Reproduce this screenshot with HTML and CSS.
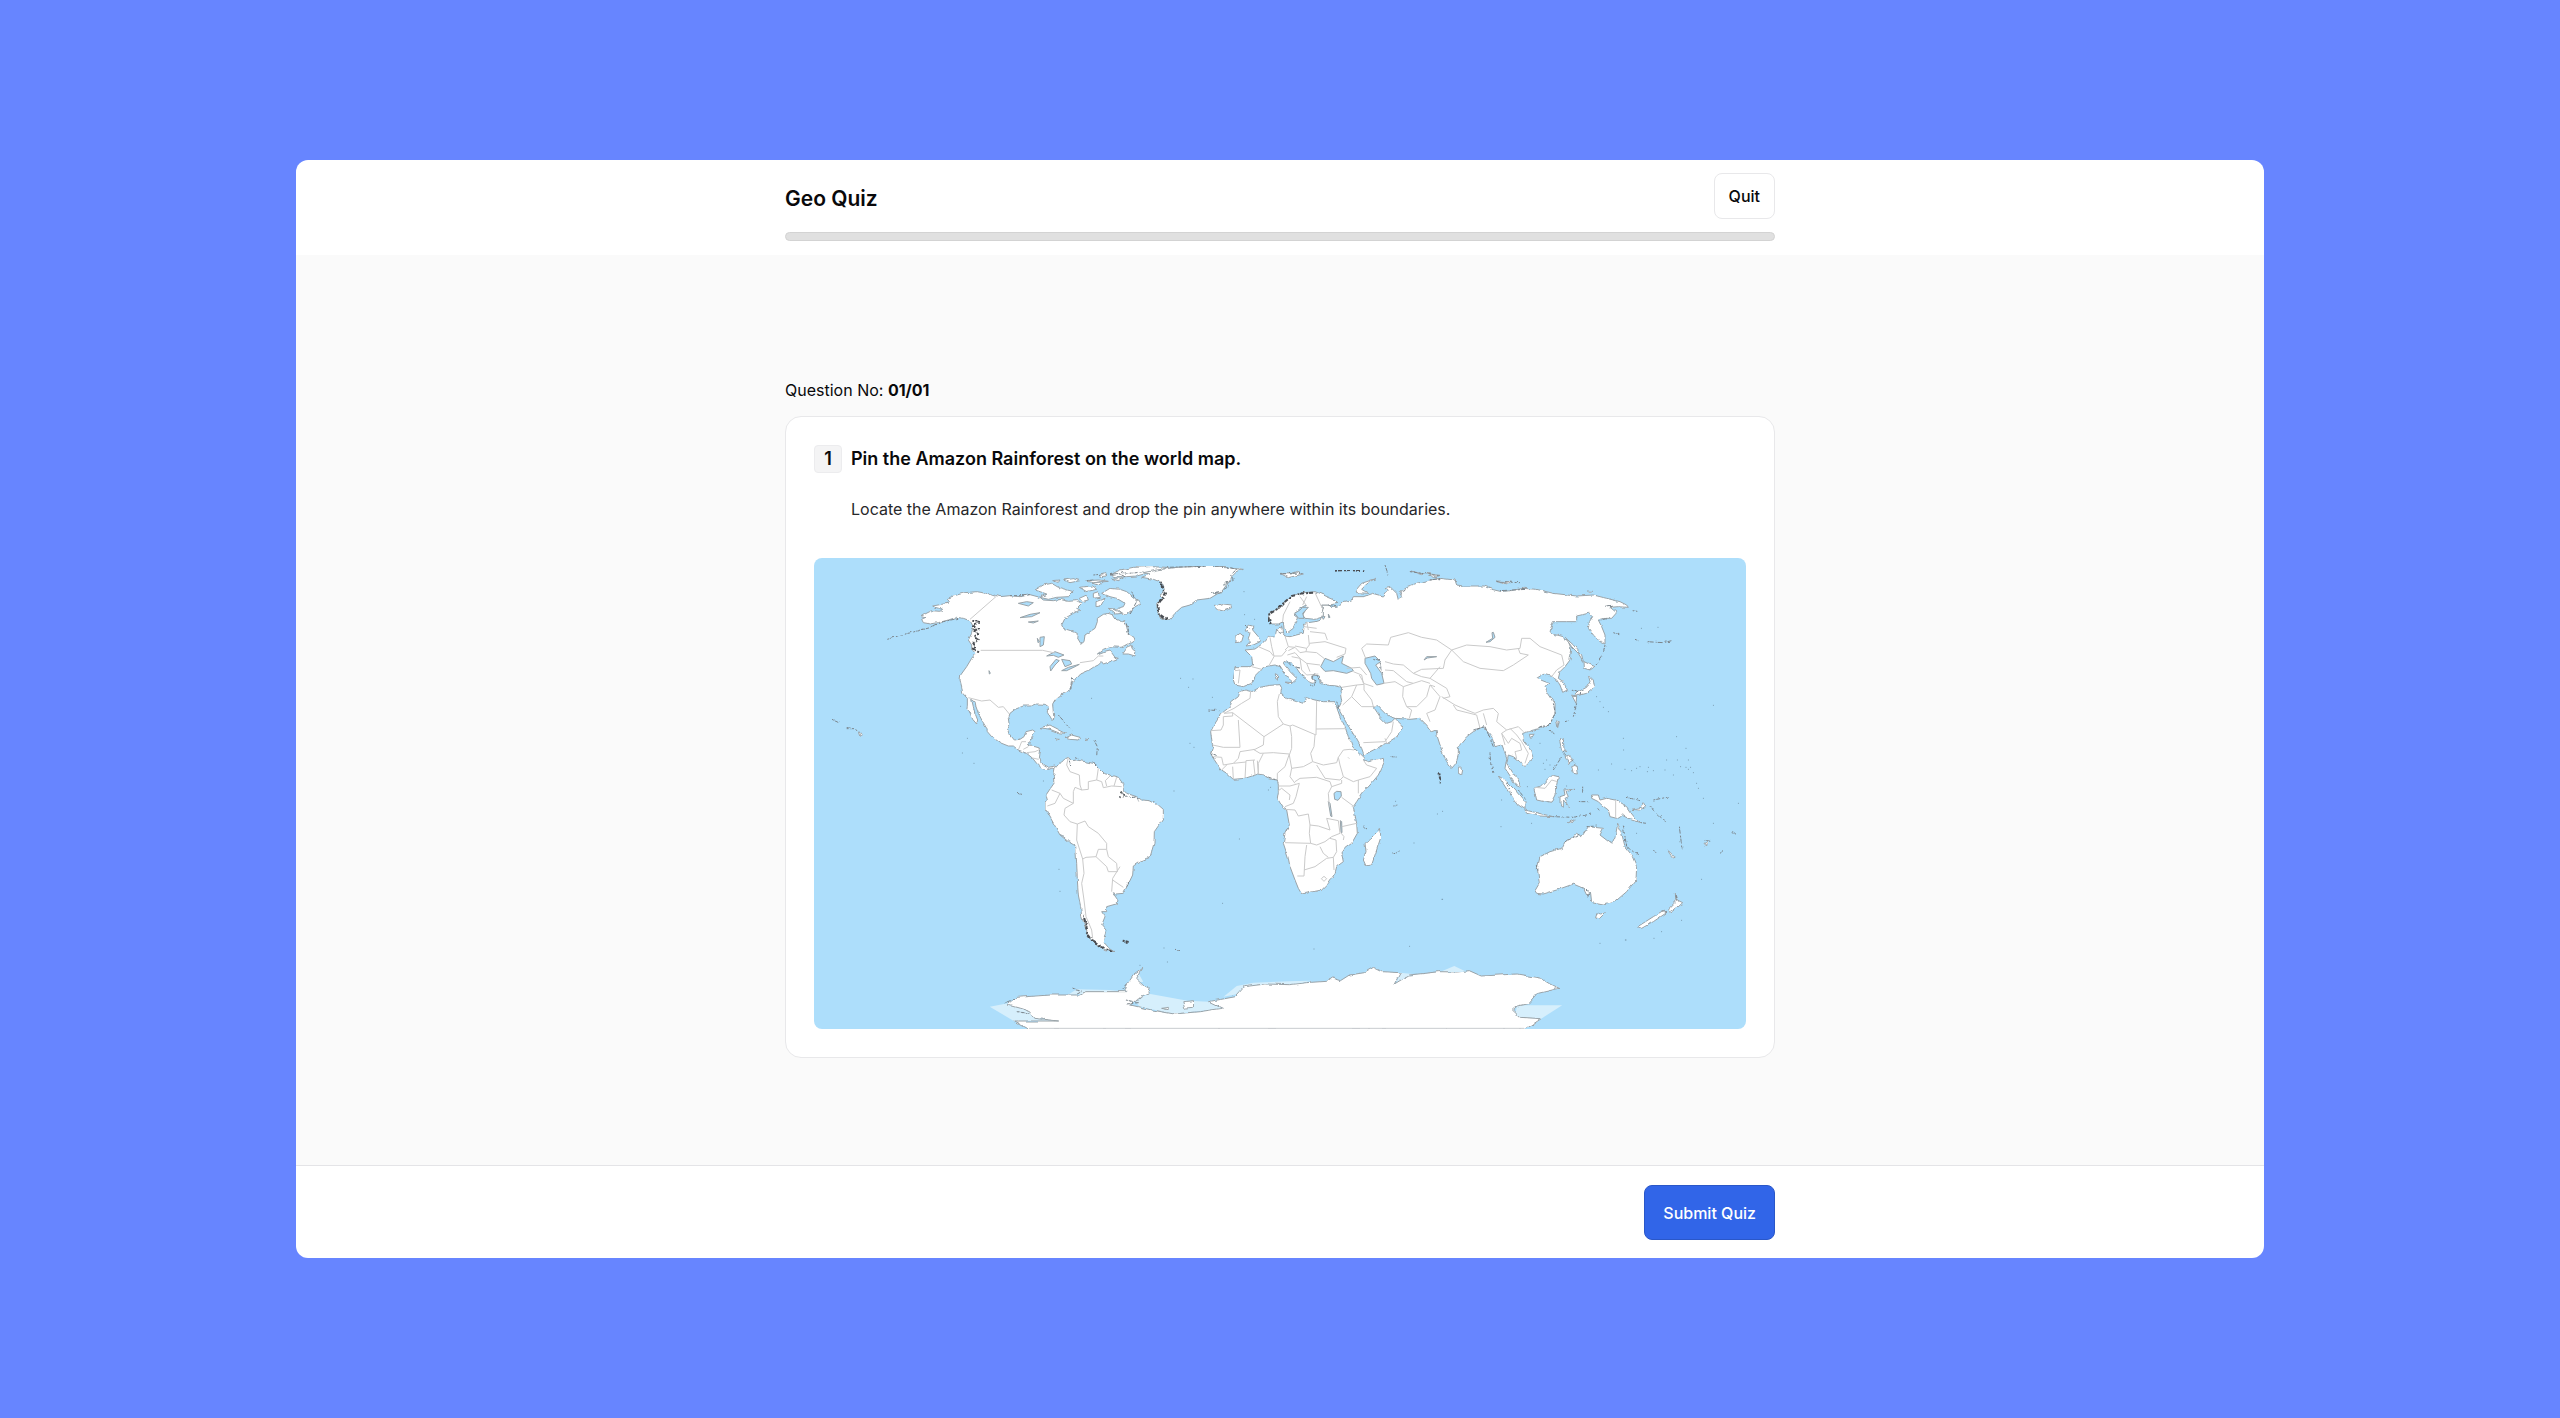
FILE: index.html
```
<!DOCTYPE html>
<html lang="en">
<head>
	<meta charset="UTF-8">
	<title>Geo Quiz</title>
	<link rel="stylesheet" href="styles.css">
</head>
<body>
	<div class="quiz">
		<header class="header">
			<div class="wrap">
				<div class="title-row">
					<h1 class="title">Geo Quiz</h1>
					<button type="button" class="btn btn-quit">Quit</button>
				</div>
				<div class="progress" role="progressbar" aria-label="Progress" aria-valuenow="0" aria-valuemin="0" aria-valuemax="100"></div>
			</div>
		</header>

		<main class="content">
			<div class="wrap">
				<p class="count">Question No: <b>01/01</b></p>
				<section class="card">
					<div class="question">
						<span class="num">1</span>
						<div>
							<h2 class="question-title">Pin the Amazon Rainforest on the world map.</h2>
							<p class="question-text">Locate the Amazon Rainforest and drop the pin anywhere within its boundaries.</p>
						</div>
					</div>
					<svg class="map" viewBox="0 0 2796 1413" role="img" aria-label="World map">
						<defs>
							<filter id="coast" x="0" y="0" width="100%" height="100%">
								<feTurbulence type="fractalNoise" baseFrequency="0.05" numOctaves="3" seed="4" result="n"/>
								<feDisplacementMap in="SourceGraphic" in2="n" scale="10" xChannelSelector="R" yChannelSelector="G"/>
							</filter>
						</defs>

						<!-- north america -->
						<g transform="translate(-12 -24)">
							<path class="land" d="M362,222 340,218 335,208 345,203 333,200 345,192 365,182 390,184 398,178 375,172 368,168 395,163 412,160 418,155 411,146 430,138 465,128 500,125 545,132 570,140 600,137 630,140 660,134 690,142 700,150 730,152 750,148 775,154 800,152 815,160 800,175 810,180 790,190 765,205 755,225 760,235 785,243 805,250 803,268 812,283 822,275 825,255 840,245 855,235 862,215 862,205 880,193 895,190 910,195 918,208 935,215 945,212 950,235 955,250 972,262 975,270 960,280 950,285 930,292 900,290 880,298 862,312 880,305 900,300 905,308 915,322 925,325 900,335 880,342 875,335 865,345 850,352 835,362 812,372 800,385 790,392 785,405 782,418 765,428 748,440 735,452 728,465 730,485 732,505 725,508 715,490 715,470 705,463 680,462 665,468 640,468 615,478 600,490 595,505 597,520 592,535 598,555 610,570 630,568 642,560 648,545 668,540 675,545 665,562 658,575 655,588 675,590 692,595 690,610 688,625 700,645 715,652 735,648 745,660 725,655 710,660 695,655 680,640 668,625 650,610 625,600 610,588 595,588 570,578 545,560 532,545 530,535 518,515 505,490 498,470 495,455 485,448 490,470 495,490 503,510 500,522 488,508 480,488 470,480 472,465 472,445 458,430 455,410 450,390 452,375 470,350 485,325 495,312 485,300 485,285 475,270 485,250 490,230 480,212 460,205 440,202 415,210 385,218Z"/>
							<path class="land" d="M675,120 700,105 725,100 745,112 790,125 775,140 740,142 715,148 690,142 710,132 690,125Z M875,130 900,115 930,118 950,125 975,145 995,160 975,170 960,185 945,195 925,185 910,178 940,170 945,160 920,145 900,140Z M900,75 930,60 970,52 1020,50 1070,52 1050,62 1010,70 980,78 950,80 920,82Z M845,100 880,95 865,106Z M808,112 845,108 860,118 830,125Z M850,130 865,125 868,142 850,145Z M808,145 830,135 835,150 815,155Z M858,155 885,145 872,168 858,170Z M895,175 920,178 935,190 915,192Z M760,90 790,86 810,92 780,98Z M728,92 750,90 745,97Z M825,92 870,90 895,94 850,98Z M870,72 885,68 890,78 870,80Z M905,85 940,84 925,92Z"/>
							<path class="land" d="M938,312 950,295 962,285 968,298 978,305 975,318 955,312Z M690,533 720,525 745,538 768,550 745,548 720,538Z M765,565 785,555 810,562 805,570 775,568Z M735,567 748,568 742,572Z M825,567 837,569 828,571Z M145,546 155,552 150,560Z"/>
							<path class="land" d="M995,82 1020,72 1000,68 1040,60 1100,52 1180,48 1250,50 1265,55 1300,58 1280,65 1265,80 1260,95 1240,105 1250,104 1235,125 1200,130 1225,130 1200,145 1160,150 1140,165 1115,172 1095,190 1080,208 1070,210 1050,200 1042,180 1040,160 1055,150 1050,135 1065,125 1060,105 1050,95 1030,88Z"/>
							<path class="land" d="M1212,165 1225,168 1240,162 1265,165 1268,173 1240,183 1220,178Z"/>
							<path class="lake" d="M710,318 735,305 762,315 745,322 730,316Z M722,363 720,350 738,328 748,332 735,345Z M755,328 780,332 785,342 765,350Z M755,362 775,352 808,343 795,350 770,362Z M625,160 650,155 670,158 655,168Z M630,203 660,193 690,188 665,200Z M655,216 685,213 670,219Z M690,262 703,260 700,285 690,290Z M682,265 688,275 684,278Z M537,362 541,370 538,372Z"/>
							<path class="border" d="M560,138 480,208 M512,301 698,301 735,309 M810,338 850,332 865,318 880,318 M475,443 515,453 540,450 565,472 580,470 598,492 M625,600 635,575 648,575 M640,598 655,590 M650,608 675,605 690,598 M668,624 686,628"/>
							<path class="rough" d="M487,212 505,215 490,228 507,235 488,245 505,250 492,262 506,268 490,280 498,290 488,296 508,308"/>
							<path class="rough thin" d="M232,268 270,256 310,246 360,232 400,215 445,205 M600,137 640,137 660,133 M945,215 955,240 955,255 M785,385 782,418 M745,495 760,512 790,542 M852,570 862,590 860,620 M110,536 130,536 148,545 M66,508 90,520"/>
							<path class="rough thin" d="M935,68 960,70 1000,65 M900,74 925,70 945,80 M965,125 980,155 960,190 M850,75 880,72 M830,92 850,90 M1250,50 1280,58 1262,75 1270,88 1245,100 1255,110 1230,125 1210,128 M1070,52 1150,50 1240,48"/>
							<path class="rough" d="M1052,95 1058,120 1068,130 1052,152 1042,165 1045,190 1072,210"/>
						</g>

						<!-- south america -->
						<g transform="translate(438 546)">
							<path class="land" d="M285,85 305,62 325,52 335,62 350,60 375,65 400,70 415,85 430,100 450,105 475,112 488,130 490,150 500,160 530,170 545,180 570,182 595,195 610,208 610,235 595,258 583,275 582,310 570,352 545,362 520,378 518,405 505,432 490,460 468,462 460,458 472,475 468,492 440,500 440,515 425,515 435,530 425,555 438,570 432,595 430,605 445,622 465,635 435,632 405,612 385,590 375,560 365,530 362,500 355,465 352,420 350,370 347,318 325,305 300,285 275,240 255,205 255,190 262,180 258,165 268,150 282,130 280,110Z"/>
							<path class="border" d="M325,52 320,75 330,95 358,105 360,135 365,150 385,148 385,125 410,120 415,85 M365,150 345,142 340,155 340,190 310,175 300,160 275,150 M300,160 285,190 262,198 M340,190 315,205 312,225 330,245 352,252 375,243 385,260 415,280 440,310 440,328 415,328 408,350 378,352 368,357 350,300 352,252 M440,328 445,350 470,370 472,395 445,395 440,380 408,350 M480,380 458,415 455,455 M458,420 490,442 M368,357 372,400 365,430 372,480 378,530 395,570 398,595 M410,120 425,125 430,143 455,138 485,140 M450,108 436,122 440,138 M470,112 462,138"/>
							<path class="rough" d="M370,525 380,560 378,575 395,600 415,618 440,628 462,636 M376,550 384,582 402,606 428,624 M482,155 492,168 478,172 M488,602 506,606"/>
							<path class="rough thin" d="M485,160 505,175 530,170 536,184 M500,440 508,425 M645,628 662,632 M328,62 332,78 M172,160 186,163 M400,68 412,82 M345,50 355,54"/>
						</g>

						<!-- europe and asia -->
						<g transform="translate(1158 -24)">
							<path class="land" d="M105,350 150,350 158,345 155,320 135,300 165,297 175,290 195,275 205,262 225,260 230,238 245,228 248,250 255,258 270,260 300,252 310,250 312,230 310,220 345,215 360,210 370,190 365,165 390,165 392,172 415,172 430,155 455,150 460,140 490,140 520,130 550,138 565,120 555,112 570,110 590,130 595,150 605,140 598,125 620,110 650,100 690,90 720,85 765,90 770,105 790,108 850,108 875,118 905,125 930,122 970,115 1010,118 1060,130 1130,138 1180,135 1220,145 1260,155 1280,165 1285,172 1255,170 1230,172 1250,188 1235,205 1215,205 1195,210 1205,230 1215,255 1215,282 1200,275 1180,255 1165,235 1168,215 1178,200 1165,190 1130,198 1130,215 1100,215 1060,215 1050,245 1060,252 1090,260 1105,275 1115,300 1110,330 1095,350 1080,365 1075,385 1090,395 1102,420 1088,427 1080,405 1070,390 1055,380 1030,372 1010,385 1035,395 1050,400 1035,412 1045,430 1065,460 1065,490 1050,520 1025,535 1000,540 985,545 968,550 970,570 990,595 998,620 985,640 975,650 960,635 940,620 925,615 920,640 940,670 955,690 962,712 945,705 932,680 915,655 920,625 905,585 885,590 875,560 850,530 820,545 800,560 775,590 775,615 768,640 755,655 740,635 725,600 712,560 708,540 695,545 680,525 660,505 630,508 585,505 570,500 555,490 530,465 520,470 540,500 560,520 575,515 585,505 605,525 610,535 590,560 560,580 520,600 492,615 485,595 465,560 440,520 420,485 418,470 425,455 422,435 425,412 410,408 380,405 360,395 358,378 350,376 335,378 345,395 340,400 330,398 318,385 300,370 290,355 275,340 258,335 250,340 270,365 290,385 285,392 275,400 272,385 255,375 240,350 225,345 205,348 190,352 180,365 165,380 155,400 130,410 120,408 105,405 100,390Z"/>
							<path class="land" d="M215,222 205,205 208,190 235,175 255,155 275,138 310,128 345,125 370,135 400,148 412,160 390,165 365,165 370,190 370,200 345,208 315,205 308,195 320,175 318,165 300,175 282,195 295,205 280,235 262,248 252,235 250,215 235,222Z"/>
							<path class="land" d="M145,225 158,228 158,240 175,260 180,275 160,285 138,288 150,275 145,265 150,250 135,240Z M105,262 120,250 130,258 125,275 105,278Z M468,120 485,100 530,85 500,102 485,118 505,130 470,128Z M240,70 270,72 290,64 310,72 265,83Z M255,396 276,398 272,404Z M226,368 233,372 232,388 227,386Z M628,62 670,72 665,74Z M675,70 720,76 700,82Z M888,93 930,95 925,102 900,98Z M1162,123 1178,124 1170,128Z M360,392 366,398 360,400Z"/>
							<path class="land" d="M775,648 788,660 785,675 775,670Z M1152,335 1185,350 1170,360 1153,355Z M1165,375 1180,390 1183,410 1160,430 1140,435 1120,440 1135,425 1160,412 1170,395Z M1115,435 1130,440 1128,460Z M1095,262 1120,285 1145,315 1150,335 1135,310 1115,290Z M1070,512 1078,515 1073,533Z M988,553 1002,553 992,567Z M1078,568 1090,568 1092,595 1100,605 1085,600Z M1115,650 1128,645 1132,672 1120,670Z M1095,620 1105,615 1120,630 1105,640Z"/>
							<path class="lake" d="M375,325 400,335 430,318 425,340 455,355 460,362 440,370 400,362 375,364 362,350Z M495,325 525,318 542,335 527,345 545,370 552,400 530,405 515,385 512,370 495,340Z M870,275 885,262 880,247 876,248 878,265 858,277Z M672,330 680,320 710,320 682,324Z M308,172 300,180 284,190 296,205 312,205 308,190 325,172Z M365,198 375,200 370,208Z M385,192 390,202 386,203Z"/>
							<path class="border" d="M105,362 120,360 115,400 M155,350 185,358 M175,290 210,305 222,320 208,345 M210,262 215,290 222,318 245,318 260,300 M255,258 265,290 285,292 265,302 M265,290 255,300 M325,255 328,285 320,295 285,288 M328,280 375,275 M330,245 375,250 382,270 M375,275 438,295 435,312 410,322 M320,295 318,305 350,308 372,325 M285,292 300,308 318,305 M262,315 285,308 300,325 320,340 360,345 M300,325 305,360 320,375 355,372 M320,340 330,365 M275,320 300,325 M312,230 350,235 M320,215 325,240 M270,155 250,195 248,215 M300,140 318,165 M345,128 362,165 370,180 M308,165 320,140"/>
							<path class="border" d="M440,355 480,352 500,375 M460,365 485,375 490,400 520,410 M425,412 470,405 492,403 M470,405 455,440 428,465 M455,440 485,470 520,470 515,450 492,420 492,403 M492,400 478,375 M580,515 575,545 555,575 490,578 M555,565 560,580 M550,400 585,395 610,410 608,440 620,470 635,480 628,505 M610,410 640,400 665,392 690,400 M620,470 650,470 680,440 690,405 705,410 M690,405 720,440 705,480 680,490 690,515 M555,335 580,342 610,345 640,370 665,380 M555,360 580,362 620,395 640,400 M497,325 485,295 500,282 565,285 572,262 625,248 665,262 710,270 755,300 735,330 730,355 665,358 640,370 M665,380 690,385 720,350 M690,385 740,415 750,440 730,445 M755,300 800,285 870,290 920,300 960,295 965,265 990,265 1020,290 1085,315 1092,345 1070,360 1055,380 M755,300 790,335 840,355 910,362 940,345 985,315 960,310 955,295 M725,440 765,465 800,480 825,490 850,480 880,475 895,490 890,515 920,540 955,530 970,545 M760,465 770,480 830,495 840,535 M850,490 860,525 M905,550 915,585 M920,540 905,550 925,580 935,565 960,580 965,600 945,605 950,625 M930,535 950,555 965,575 985,610 975,640 M1080,395 1092,392"/>
							<path class="rough" d="M212,222 206,208 208,192 235,175 255,155 275,138 310,130 345,128 M405,62 450,60 490,64 M718,670 722,700"/>
							<path class="rough thin" d="M258,332 272,345 300,355 M345,370 335,382 350,395 345,410 330,405 M350,375 358,390 M230,238 240,250 250,245 M135,225 145,235 M240,72 310,68 M630,65 720,78 M555,45 565,75 M690,90 720,86 M598,128 625,115 M890,95 960,98 M900,122 980,118 M1215,172 1240,168 M1200,210 1225,205 M1298,182 1312,184 M1240,248 1258,254 M1305,268 1315,272 M1340,275 1390,278 1415,272 M1215,285 1210,310 1185,345 M1130,460 1120,500 M1095,515 1105,512 M1115,420 1145,432 M1060,460 1066,490 1050,520 1020,535 M820,540 855,530 880,590 M870,610 872,640 882,670 M1085,620 1060,660 M1085,600 1125,640 M1050,540 1062,555 M520,325 540,332 545,375 M575,620 590,622 M385,165 412,172 M410,455 420,480 M25,480 60,482"/>
						</g>

						<!-- africa -->
						<g transform="translate(1128 336)">
							<path class="land" d="M150,65 165,60 185,65 210,52 240,46 270,44 275,55 272,72 290,85 320,95 335,102 345,90 345,82 375,90 400,95 432,95 440,112 450,140 465,170 475,200 485,215 492,235 510,250 525,265 520,270 535,275 580,265 582,278 565,315 540,345 515,372 500,395 490,410 495,435 500,460 502,490 485,520 465,535 455,550 460,575 440,590 435,610 415,640 395,660 370,665 335,672 325,655 315,630 300,590 295,565 280,520 285,490 298,465 290,420 280,415 262,385 265,365 265,345 262,330 245,328 230,325 225,315 205,312 180,320 165,325 130,328 110,310 95,300 80,280 70,265 62,250 68,230 65,210 62,185 72,165 95,130 120,110 125,95 145,80Z"/>
							<path class="land" d="M568,475 573,500 560,540 545,585 528,588 520,570 528,545 525,520 545,505 560,490Z"/>
							<path class="lake" d="M432,370 440,364 453,365 454,378 444,391 434,388Z M415,395 420,400 426,440 422,438Z M451,452 455,455 456,488 453,486Z"/>
							<path class="border" d="M182,62 180,85 155,100 132,115 102,130 128,128 128,138 100,140 100,165 93,180 62,182 M128,128 222,200 280,162 300,168 308,165 378,195 380,92 M268,72 262,95 265,140 280,162 M145,150 150,232 100,232 68,225 M222,200 220,225 195,238 150,245 145,265 130,280 100,285 M378,177 468,176 M375,195 372,230 362,250 368,275 400,285 440,278 445,262 460,240 480,238 492,240 M300,168 305,200 305,235 298,255 M305,295 340,290 368,275 M190,238 210,250 250,248 298,252 M205,312 205,280 220,250 M298,252 285,290 262,310 262,330 M298,255 305,295 300,320 315,340 M380,285 405,325 450,330 460,320 450,285 445,262 M460,320 490,335 505,330 540,320 560,295 530,285 520,270 M505,330 505,370 M315,335 330,325 380,322 420,335 M265,348 300,348 328,340 318,380 310,400 285,410 M265,362 275,355 300,375 298,390 M420,335 425,350 415,370 418,410 M455,382 490,408 M455,470 500,460 M285,418 315,420 325,438 355,432 360,465 358,490 362,520 285,518 M360,465 385,468 420,480 410,445 445,452 450,490 425,500 405,515 380,525 362,520 M350,525 345,560 342,618 322,618 M342,600 375,590 410,565 430,562 440,545 438,510 420,505 M390,530 400,550 415,562 M430,562 432,600 M165,325 168,272 195,270 M195,315 190,270 M205,312 202,272 M130,328 128,290 M130,280 168,276 M100,285 95,262 70,260 M95,300 110,285 M425,350 455,340 455,330 M452,488 462,500 460,510 M394,626 402,619 410,626 402,634Z M474,262 478,266"/>
							<path class="rough thin" d="M62,250 80,256 M68,262 78,268 M432,98 438,108 M520,468 532,478 M610,408 622,405 M610,552 628,545 M225,318 260,330"/>
						</g>

						<!-- oceania -->
						<g transform="translate(1878 366)">
							<path class="land" d="M290,640 285,632 298,610 292,565 300,530 330,515 365,505 375,485 410,460 425,470 445,440 490,445 480,465 515,492 525,470 533,430 545,460 555,500 575,525 590,560 588,600 560,635 525,665 490,675 455,668 452,640 440,645 430,625 400,612 350,630 310,642Z"/>
							<path class="land" d="M470,698 482,702 496,698 478,716 467,714Z M703,640 712,660 728,668 710,685 690,698 685,690 705,670Z M593,740 640,710 672,690 680,698 640,725 605,745Z M175,288 195,300 225,330 255,365 255,388 235,375 205,335Z M255,390 310,403 340,410 300,408 260,400Z M282,325 300,320 335,285 355,290 350,315 348,345 335,370 290,360Z M360,350 375,345 372,330 405,328 378,335 385,350 375,355 388,380 370,360 370,385 360,370Z M455,345 475,345 480,360 500,355 525,360 560,380 570,395 590,420 600,428 575,420 545,405 530,415 510,410 505,390 485,375 475,365 455,355Z M575,388 605,382 612,368 617,378 600,390Z M685,512 705,532 700,534 688,520Z M385,428 405,418 395,430Z M792,490 802,486 800,498Z"/>
							<path class="border" d="M527,360 527,415 M285,322 315,325 335,300 352,305"/>
							<path class="rough thin" d="M340,410 400,412 455,402 M415,365 450,365 M428,320 428,345 M630,380 660,410 680,425 M718,440 726,505 M550,440 560,500 580,515 600,528 M196,300 215,345 M235,330 258,360 M430,625 445,635 440,650 452,640 M375,485 420,462 M440,440 470,438 M292,555 294,572 M640,360 690,350 M560,352 600,362 M665,692 680,698 M705,645 710,662 M470,385 478,395 M640,510 650,520 M600,428 625,430 M840,520 850,512 M875,458 888,462 M790,480 812,484"/>
							<path class="dots" d="M475,270h0 M515,252h0 M555,268h0 M575,272h0 M590,265h0 M600,260h0 M622,275h0 M625,262h0 M640,272h0 M680,240h0 M675,270h0 M700,285h0 M712,240h0 M722,260h0 M738,262h0 M745,240h0 M745,268h0 M752,262h0 M760,278h0 M770,310h0 M775,325h0 M790,355h0 M738,205h0 M820,76h0 M710,170h0 M550,175h0 M551,210h0 M470,50h0 M480,65h0 M490,82h0 M505,95h0 M300,190h0 M320,240h0 M310,250h0 M315,268h0 M330,255h0 M183,440h0 M275,430h0 M185,360h0 M895,370h0 M820,430h0 M785,598h0 M725,721h0 M558,780h0 M642,775h0 M665,755h0 M8,658h0 M590,460h0 M380,318h0 M262,320h0"/>
						</g>
						<path class="dots" d="M833,421h0 M440,445h0 M445,585h0 M460,541h0 M480,616h0 M688,669h0 M1137,363h0 M1124,388h0 M1100,361h0 M1195,418h0 M1128,556h0 M1140,568h0 M738,1000h0 M735,934h0 M1080,699h0 M1290,101h0 M1292,170h0 M1322,184h0 M1276,843h0 M1226,1036h0 M1363,696h0 M1370,688h0 M1500,1173h0 M1787,1165h0 M1884,1024h0 M1870,768h0 M1745,730h0 M1800,855h0 M2358,1156h0 M2434,1146h0 M1050,1170h0 M1060,1212h0 M978,1222h0 M2482,211h0 M2532,208h0 M1886,760h0"/>

						<!-- antarctica -->
						<g transform="translate(-12 1146) scale(1.798 1)">
							<path class="ice" d="M300,200 330,190 370,215 375,235 415,243 340,243Z M540,178 568,162 630,182 665,185 690,205 608,222 550,200Z M1180,196 1255,196 1220,236 1175,236Z M690,170 712,138 740,128 800,124 835,122 800,140 720,160Z M978,132 985,98 1005,102Z M1050,97 1075,78 1095,95Z M430,165 445,148 500,150 530,155Z M535,130 548,100 556,125Z"/>
							<path class="land" d="M340,243 415,243 375,235 368,215 350,205 330,195 345,172 400,165 450,165 460,155 525,155 530,130 540,105 555,85 545,115 560,140 568,160 545,178 535,195 570,210 608,222 650,215 688,205 665,185 710,170 725,140 760,132 800,134 830,128 862,124 870,114 885,122 900,105 925,98 940,82 955,95 985,98 975,132 1000,105 1050,95 1080,96 1100,92 1120,108 1180,102 1220,115 1232,128 1250,145 1215,160 1200,190 1180,198 1172,210 1185,232 1220,236 1192,270 368,270Z"/>
							<path class="land" d="M622,185 640,182 640,202 625,205Z M585,205 598,202 596,209Z"/>
							<path class="rough thin" d="M440,145 455,150 445,160 M527,180 548,188 530,192 M522,150 532,125 M345,215 368,222 M325,190 345,175"/>
						</g>
						<path class="edge" d="M645,1411H2130"/>
					</svg>
				</section>
			</div>
		</main>

		<footer class="footer">
			<div class="wrap footer-row">
				<button type="submit" class="btn btn-submit">Submit Quiz</button>
			</div>
		</footer>
	</div>
</body>
</html>
```
FILE: styles.css
```
*{
	margin: 0;
	padding: 0;
	box-sizing: border-box;
}
body{
	display: flex;
	min-height: 100vh;
	padding: 160px 296px;
	background: #6785ff;
	font-family: Inter, "Liberation Sans", sans-serif;
	font-size: 16px;
	line-height: 24px;
	color: #09090b;
}
.quiz{
	flex: 1;
	display: flex;
	flex-direction: column;
	border-radius: 12px;
	background: #fff;
	overflow: hidden;
}
.wrap{
	width: 100%;
	max-width: 990px;
	margin: 0 auto;
}
.header{
	padding: 13px 0 14px;
}
.title-row{
	display: flex;
	justify-content: space-between;
	align-items: center;
	margin-bottom: 13px;
}
.title{
	padding-top: 6px;
	font-size: 21px;
	line-height: 28px;
	font-weight: 600;
}
.btn{
	border-radius: 8px;
	font-family: inherit;
	font-size: 16px;
	font-weight: 500;
	cursor: pointer;
}
.btn-quit{
	height: 46px;
	padding: 0 14px;
	border: 1px solid #e8e8ea;
	background: #fff;
	color: #09090b;
}
.progress{
	height: 9px;
	border: 1px solid #d3d3d3;
	border-radius: 5px;
	background: #e0e0e0;
}
.content{
	flex: 1;
	display: flex;
	align-items: center;
	padding-top: 16px;
	background: #fafafa;
}
.count{
	margin-bottom: 14px;
}
.count b{
	font-weight: 700;
}
.card{
	padding: 28px;
	border: 1px solid #e8e8ea;
	border-radius: 16px;
	background: #fff;
}
.question{
	display: flex;
	gap: 9px;
	margin-bottom: 37px;
}
.num{
	width: 28px;
	height: 28px;
	border: 1px solid #ececee;
	border-radius: 4px;
	background: #f4f4f5;
	font-size: 18px;
	line-height: 26px;
	font-weight: 600;
	text-align: center;
}
.question-title{
	margin-bottom: 24px;
	font-size: 18px;
	line-height: 28px;
	font-weight: 600;
}
.question-text{
	color: #27272a;
}
.map{
	display: block;
	width: 100%;
	border-radius: 8px;
	background: #addefb;
}
.map path{
	vector-effect: non-scaling-stroke;
	stroke-width: 1px;
	stroke-linejoin: round;
}
.land{
	fill: #fff;
	stroke: #9aa3a8;
	filter: url(#coast);
}
.lake{
	fill: #addefb;
	stroke: #9aa3a8;
}
.ice{
	fill: #d6effc;
}
.border{
	fill: none;
	stroke: #cacaca;
}
.rough{
	fill: none;
	stroke: #4a4e52;
	stroke-dasharray: 2 1 4 2;
	filter: url(#coast);
}
.map .rough{
	stroke-width: 2px;
}
.map .rough.thin{
	stroke: #7a848b;
	stroke-width: 1px;
}
.dots{
	fill: none;
	stroke: #6f8da0;
	stroke-linecap: round;
}
.edge{
	stroke: #c8cccf;
}
.footer{
	padding: 19px 0 18px;
	border-top: 1px solid #e4e4e7;
}
.footer-row{
	display: flex;
	justify-content: flex-end;
}
.btn-submit{
	height: 55px;
	padding: 0 18px;
	border: 1px solid #2a57c8;
	background: #3165e8;
	color: #fff;
}
```
